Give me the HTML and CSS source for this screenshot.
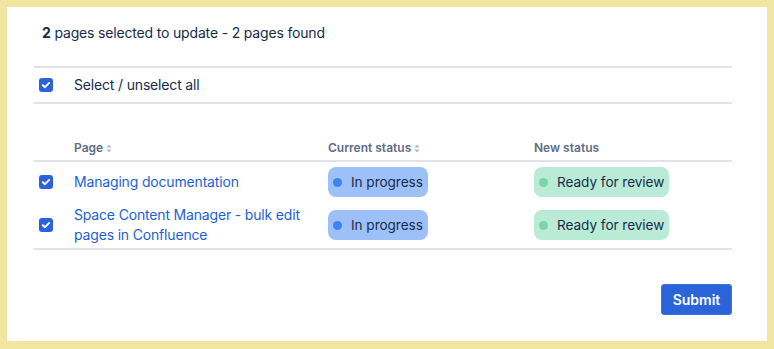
FILE: index.html
```html
<!DOCTYPE html>
<html>
<head>
<meta charset="utf-8">
<link rel="stylesheet" href="styles.css">
</head>
<body>
<div class="frame">
  <div class="card">
    <p class="summary"><b>2</b> pages selected to update - 2 pages found</p>
    <div class="select-all">
      <span class="cb"><svg viewBox="0 0 14 14" width="14" height="14"><path d="M3.8 7.2 L6 9.2 L10.2 4.9" fill="none" stroke="#fff" stroke-width="1.9" stroke-linecap="round" stroke-linejoin="round"/></svg></span>
      <span class="sa-label">Select / unselect all</span>
    </div>
    <div class="table">
      <div class="thead">
        <div></div>
        <div class="th">Page<span class="sort"><svg viewBox="0 0 6 9" width="6" height="9"><path d="M3 0.5 L5.5 3.5 H0.5 Z M3 8.5 L5.5 5.5 H0.5 Z" fill="#b3b9c4"/></svg></span></div>
        <div class="th">Current status<span class="sort"><svg viewBox="0 0 6 9" width="6" height="9"><path d="M3 0.5 L5.5 3.5 H0.5 Z M3 8.5 L5.5 5.5 H0.5 Z" fill="#b3b9c4"/></svg></span></div>
        <div class="th">New status</div>
      </div>
      <div class="tr">
        <div class="cbcell"><span class="cb"><svg viewBox="0 0 14 14" width="14" height="14"><path d="M3.8 7.2 L6 9.2 L10.2 4.9" fill="none" stroke="#fff" stroke-width="1.9" stroke-linecap="round" stroke-linejoin="round"/></svg></span></div>
        <div><a class="link" href="#">Managing documentation</a></div>
        <div><span class="loz loz-blue"><span class="dot"></span>In progress</span></div>
        <div><span class="loz loz-green"><span class="dot"></span>Ready for review</span></div>
      </div>
      <div class="tr last">
        <div class="cbcell"><span class="cb"><svg viewBox="0 0 14 14" width="14" height="14"><path d="M3.8 7.2 L6 9.2 L10.2 4.9" fill="none" stroke="#fff" stroke-width="1.9" stroke-linecap="round" stroke-linejoin="round"/></svg></span></div>
        <div><a class="link" href="#">Space Content Manager - bulk edit pages in Confluence</a></div>
        <div><span class="loz loz-blue"><span class="dot"></span>In progress</span></div>
        <div><span class="loz loz-green"><span class="dot"></span>Ready for review</span></div>
      </div>
    </div>
    <div class="actions">
      <button class="submit">Submit</button>
    </div>
  </div>
</div>
</body>
</html>
```

FILE: styles.css
```css
html, body {
  margin: 0;
  padding: 0;
}
body {
  background: #f0e6a1;
  font-family: Inter, "Liberation Sans", Arial, sans-serif;
  color: #172b4d;
  font-size: 14px;
  letter-spacing: -0.17px;
}
.frame {
  padding: 7px 7px 8px 7px;
  height: 334px;
}
.card {
  background: #fff;
  height: 334px;
  padding: 0 35px 0 27px;
  box-sizing: border-box;
}
.summary {
  margin: 0;
  padding: 16px 0 0 8px;
  line-height: 20px;
  height: 43px;
  box-sizing: border-box;
  font-size: 14px;
}
.summary b {
  font-weight: 700;
}
.select-all {
  margin-top: 16px;
  border-top: 2px solid #e1e3e8;
  border-bottom: 2px solid #e1e3e8;
  height: 34px;
  display: flex;
  align-items: center;
}
.cb {
  display: inline-flex;
  width: 14px;
  height: 14px;
  background: #2b62dc;
  border-radius: 3px;
  margin-left: 5px;
}
.cb svg {
  display: block;
}
.sa-label {
  margin-left: 21px;
  line-height: 20px;
}
.table {
  margin-top: 32px;
}
.thead, .tr {
  display: grid;
  grid-template-columns: 40px 254px 206px 1fr;
  align-items: center;
}
.thead {
  height: 24px;
  border-bottom: 2px solid #e1e3e8;
  box-sizing: content-box;
}
.th {
  font-size: 12px;
  font-weight: 600;
  letter-spacing: 0;
  color: #5e6c84;
  display: flex;
  align-items: center;
  line-height: 16px;
}
.sort {
  margin-left: 3px;
  display: inline-flex;
}
.sort svg {
  display: block;
}
.tr {
  padding: 2px 0 3px 0;
  min-height: 36px;
}
.tr.last {
  border-bottom: 2px solid #e1e3e8;
}
.cbcell {
  display: flex;
  align-items: center;
}
.link {
  color: #1d5fd6;
  text-decoration: none;
  line-height: 20px;
  display: block;
}
.loz {
  display: inline-flex;
  align-items: center;
  height: 30px;
  border-radius: 8px;
  padding: 0 5px 0 5px;
  color: #172b4d;
  font-size: 13.6px;
  letter-spacing: -0.05px;
}
.dot {
  width: 9px;
  height: 9px;
  border-radius: 50%;
  margin-right: 9px;
}
.loz-blue {
  background: #9dc0f8;
}
.loz-blue .dot {
  background: #3f82f4;
}
.loz-green {
  background: #baebd6;
}
.loz-green .dot {
  background: #7dd4a7;
}
.actions {
  display: flex;
  justify-content: flex-end;
  margin-top: 34px;
}
.submit {
  width: 71px;
  height: 31px;
  background: #2b63d9;
  border: 1px solid #3b72e3;
  border-radius: 3px;
  color: #fff;
  font-family: Inter, "Liberation Sans", Arial, sans-serif;
  font-size: 14px;
  font-weight: 600;
  letter-spacing: 0;
  padding: 0;
}
```
